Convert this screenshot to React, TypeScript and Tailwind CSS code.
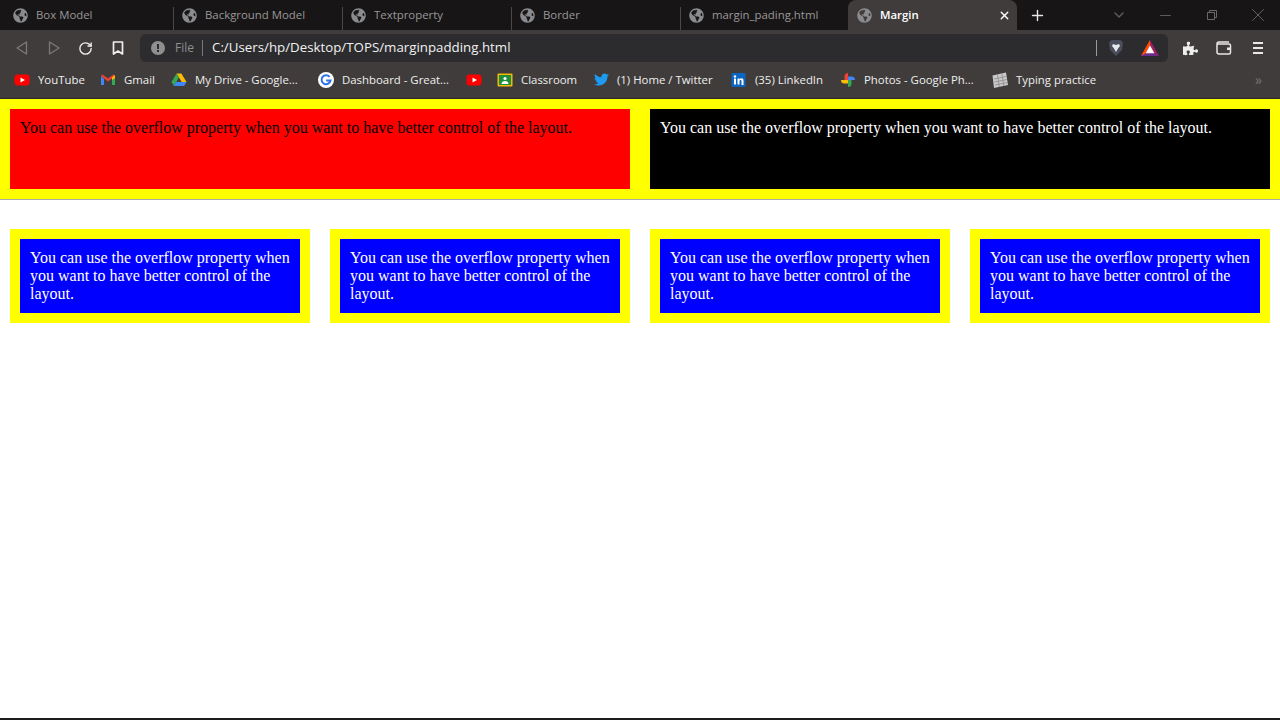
import React from 'react';
import { FaGlobeAmericas, FaPuzzlePiece, FaTwitter } from 'react-icons/fa';
import { ChevronDown, Minus, Plus, RotateCw, X } from 'lucide-react';

const text = 'You can use the overflow property when you want to have better control of the layout.';

const tabs = ['Box Model', 'Background Model', 'Textproperty', 'Border', 'margin_pading.html'];

function Youtube() {
  return (
    <svg width="16" height="16" viewBox="0 0 16 16" className="shrink-0">
      <rect x="0.5" y="2.5" width="15" height="11" rx="3" fill="#ff0000" />
      <path d="M6.5 5.5v5L11 8z" fill="#fff" />
    </svg>
  );
}

function Gmail() {
  return (
    <svg width="16" height="16" viewBox="0 0 16 16" className="shrink-0">
      <path d="M1 4v9h3V7z" fill="#4285f4" />
      <path d="M15 4v9h-3V7z" fill="#34a853" />
      <path d="M1 4l7 5.500L15 4l-1.500-1.500L8 6.500 2.500 2.500z" fill="#ea4335" />
      <path d="M12 5.500L15 3v3l-3 2z" fill="#fbbc04" />
    </svg>
  );
}

function Drive() {
  return (
    <svg width="16" height="16" viewBox="0 0 16 16" className="shrink-0">
      <path d="M5.600 1.500h4.800L15.500 10h-4.800z" fill="#fbbc04" />
      <path d="M5.600 1.500L.5 10l2.400 4 5-8.400z" fill="#34a853" />
      <path d="M5 10h10.500l-2.400 4H2.900z" fill="#4285f4" />
    </svg>
  );
}

function GoogleG() {
  return (
    <svg width="16" height="16" viewBox="0 0 16 16" className="shrink-0">
      <circle cx="8" cy="8" r="8" fill="#fff" />
      <path d="M11.600 4.900A4.500 4.500 0 1 0 12.500 8.500H8.200" fill="none" stroke="#2a70e8" strokeWidth="2" />
    </svg>
  );
}

function Classroom() {
  return (
    <svg width="16" height="16" viewBox="0 0 16 16" className="shrink-0">
      <rect x="0.500" y="1.500" width="15" height="13" rx="1" fill="#f5b800" />
      <rect x="2" y="3" width="12" height="10" fill="#1e8e3e" />
      <circle cx="8" cy="6.500" r="1.600" fill="#fff" />
      <path d="M4.500 12c0-2 1.500-3 3.500-3s3.500 1 3.500 3z" fill="#fff" />
    </svg>
  );
}

function Linkedin() {
  return (
    <svg width="16" height="16" viewBox="0 0 16 16" className="shrink-0">
      <rect x="0.500" y="1" width="14" height="14" rx="1" fill="#0a66c2" />
      <rect x="3" y="6.500" width="2" height="6" fill="#fff" />
      <circle cx="4" cy="4.500" r="1.200" fill="#fff" />
      <path d="M6.500 6.500h2v1c.5-.8 1.200-1.200 2-1.200 1.500 0 2 1 2 2.500v4.200h-2V9c0-.7-.3-1-.9-1s-1.100.4-1.100 1.200v3.300h-2z" fill="#fff" />
    </svg>
  );
}

function Photos() {
  return (
    <svg width="16" height="16" viewBox="0 0 16 16" className="shrink-0">
      <path d="M8 8V1a3.500 3.500 0 0 0-3.500 3.500V8z" fill="#ea4335" />
      <path d="M8 8H1a3.500 3.500 0 0 0 3.500 3.500H8z" fill="#fbbc04" />
      <path d="M8 8v7a3.500 3.500 0 0 0 3.500-3.500V8z" fill="#34a853" />
      <path d="M8 8h7a3.500 3.500 0 0 0-3.500-3.500H8z" fill="#4285f4" />
    </svg>
  );
}

function Typing() {
  return (
    <svg width="16" height="16" viewBox="0 0 16 16" className="shrink-0">
      <path d="M.5 3.500L14 .5 16 13 2 16z" fill="#c9c9c9" />
      <path d="M2 7l12-2.500M2.500 10l12.500-2.500M3 13l12.500-2.500M5.500 3l1.800 12M10 2l1.800 12" stroke="#8a8a8a" strokeWidth="0.800" fill="none" />
    </svg>
  );
}

function Brave() {
  return (
    <svg width="16" height="18" viewBox="0 0 16 18">
      <path d="M3.500 1h9L15 3.500 14 11l-6 6-6-6-1-7.500z" fill="#4a4d5c" />
      <path d="M5 5l3 1 3-1 1 2-2 2.500L8 13 6 9.500 4 7z" fill="#e8e8ec" />
    </svg>
  );
}

function Bat() {
  return (
    <svg width="18" height="16" viewBox="0 0 18 16">
      <path d="M9 0l9 16H0z" fill="#9e1f63" />
      <path d="M9 0L0 16l4.500-2.600L9 5.500z" fill="#ff5000" />
      <path d="M9 5.500l4.500 8H4.500z" fill="#fff" />
      <path d="M0 16h18l-4.500-2.500h-9z" fill="#662d91" />
    </svg>
  );
}

function Wallet() {
  return (
    <svg width="16" height="14" viewBox="0 0 16 14" fill="none" stroke="#e8e8e8" strokeWidth="1.500">
      <path d="M13 1H3a2 2 0 0 0-2 2v8a2 2 0 0 0 2 2h10a1.500 1.500 0 0 0 1.500-1.500v-7A1.500 1.500 0 0 0 13 3H1.500" />
      <rect x="11" y="6.500" width="3.500" height="2.500" fill="#e8e8e8" stroke="none" />
    </svg>
  );
}

function Restore() {
  return (
    <svg width="10" height="10" viewBox="0 0 10 10" fill="none" stroke="#6b6869">
      <path d="M.5 2.500h7v7h-7zM2.500 2.500v-2h7v7h-2" />
    </svg>
  );
}

const bookmarks = [
  { icon: <Youtube />, label: 'YouTube', width: 'w-[86px]' },
  { icon: <Gmail />, label: 'Gmail', width: 'w-[71px]' },
  { icon: <Drive />, label: 'My Drive - Google...', width: 'w-[147px]' },
  { icon: <GoogleG />, label: 'Dashboard - Great...', width: 'w-[148px]' },
  { icon: <Youtube />, label: '', width: 'w-[31px]' },
  { icon: <Classroom />, label: 'Classroom', width: 'w-[97px]' },
  { icon: <FaTwitter size={15} color="#1d9bf0" className="shrink-0" />, label: '(1) Home / Twitter', width: 'w-[137px]' },
  { icon: <Linkedin />, label: '(35) LinkedIn', width: 'w-[109px]' },
  { icon: <Photos />, label: 'Photos - Google Ph...', width: 'w-[152px]' },
  { icon: <Typing />, label: 'Typing practice', width: 'w-[120px]' },
];

export default function App() {
  return (
    <div className="flex h-screen flex-col overflow-hidden bg-white">
      <div className="flex h-[30px] shrink-0 bg-[#171516] pl-[5px] font-['Open_Sans',sans-serif] text-[11.4px]">
        {tabs.map((tab) => (
          <div key={tab} className="flex w-[169px] items-center gap-2 pl-[8px] text-[#9a9899]">
            <FaGlobeAmericas size={15} color="#8a8b8e" className="shrink-0" />
            <span>{tab}</span>
            <span className="ml-auto h-[23px] w-px self-end bg-[#4a4849]" />
          </div>
        ))}
        <div className="-ml-[2px] flex w-[169px] items-center gap-2 rounded-t-lg bg-[#403c3b] pl-[9px] pr-[6px] font-semibold text-white">
          <FaGlobeAmericas size={15} color="#8a8b8e" className="shrink-0" />
          <span>Margin</span>
          <X size={13} strokeWidth={2.5} className="ml-auto" />
        </div>
        <div className="flex w-10 items-center justify-center">
          <Plus size={17} color="#e8e8e8" strokeWidth={2} />
        </div>
        <div className="flex flex-1 items-center">
          <ChevronDown size={16} color="#5f5d5e" className="ml-[54px]" />
          <Minus size={17} color="#6b6869" strokeWidth={1.2} className="ml-[30px]" />
          <div className="ml-[33px]"><Restore /></div>
          <X size={22} color="#6b6869" strokeWidth={1} className="ml-[30px]" />
        </div>
      </div>

      <div className="flex h-9 shrink-0 items-center bg-[#403c3b] font-['Open_Sans',sans-serif]">
        <div className="flex w-[140px] items-center pl-4">
          <svg width="12" height="14" viewBox="0 0 12 14" fill="none" stroke="#7d7976" strokeWidth="1.300" strokeLinejoin="round">
            <path d="M10.500 1L1 7l9.500 6z" />
          </svg>
          <svg width="12" height="14" viewBox="0 0 12 14" fill="none" stroke="#7d7976" strokeWidth="1.300" strokeLinejoin="round" className="ml-5">
            <path d="M1.500 1L11 7l-9.500 6z" />
          </svg>
          <RotateCw size={15} color="#eeeeee" strokeWidth={2.2} className="ml-[18px]" />
          <svg width="12" height="14" viewBox="0 0 12 14" fill="none" stroke="#eeeeee" strokeWidth="1.700" strokeLinejoin="round" className="ml-[19px]">
            <path d="M1.500 1h9v12L6 10l-4.500 3z" />
          </svg>
        </div>
        <div className="flex h-7 w-[1028px] items-center rounded-md bg-[#2c2b2e] pl-[11px] pr-[9px] text-[13.3px]">
          <svg width="14" height="14" viewBox="0 0 14 14" className="shrink-0">
            <circle cx="7" cy="7" r="7" fill="#8f8f90" />
            <rect x="6" y="3" width="2" height="5" fill="#2c2b2e" />
            <rect x="6" y="9" width="2" height="2" fill="#2c2b2e" />
          </svg>
          <span className="ml-[10px] text-xs text-[#8f8f90]">File</span>
          <span className="ml-[8px] h-4 w-px bg-[#77767a]" />
          <span className="ml-[9px] text-[#f1f1f1]">C:/Users/hp/Desktop/TOPS/marginpadding.html</span>
          <span className="ml-auto h-4 w-px bg-[#9a9a9c]" />
          <div className="ml-[11px]"><Brave /></div>
          <div className="ml-[17px]"><Bat /></div>
        </div>
        <div className="flex flex-1 items-center pl-[15px]">
          <FaPuzzlePiece size={15} color="#eeeeee" />
          <div className="ml-[18px]"><Wallet /></div>
          <div className="ml-[21px] flex w-[10px] flex-col gap-[3px]">
            <span className="h-[2px] bg-[#e8e8e8]" />
            <span className="h-[2px] bg-[#e8e8e8]" />
            <span className="h-[2px] bg-[#e8e8e8]" />
          </div>
        </div>
      </div>

      <div className="flex h-[33px] shrink-0 items-center border-b border-[#2a2828] bg-[#403c3b] pb-1 pl-[14px] font-['Open_Sans',sans-serif] text-[11.4px] text-[#efefef]">
        {bookmarks.map((b, i) => (
          <div key={i} className={`flex items-center gap-2 ${b.width}`}>
            {b.icon}
            {b.label && <span className="whitespace-nowrap">{b.label}</span>}
          </div>
        ))}
        <span className="ml-auto pr-[18px] text-sm text-[#77736f]">»</span>
      </div>

      <div className="flex-1 font-['Liberation_Serif',serif] text-base leading-[18px]">
        <div className="flex gap-5 border-b border-[#aaaaaa] bg-[#ffff00] p-[10px]">
          <div className="h-20 flex-1 bg-[#ff0000] p-[10px] text-black">{text}</div>
          <div className="h-20 flex-1 bg-black p-[10px] text-white">{text}</div>
        </div>
        <div className="mt-[29px] flex gap-5 px-[10px]">
          {[0, 1, 2, 3].map((n) => (
            <div key={n} className="flex-1 bg-[#ffff00] p-[10px]">
              <div className="bg-[#0000ff] p-[10px] text-white">{text}</div>
            </div>
          ))}
        </div>
      </div>
      <div className="h-[2px] shrink-0 bg-[#1c1c1c]" />
    </div>
  );
}
